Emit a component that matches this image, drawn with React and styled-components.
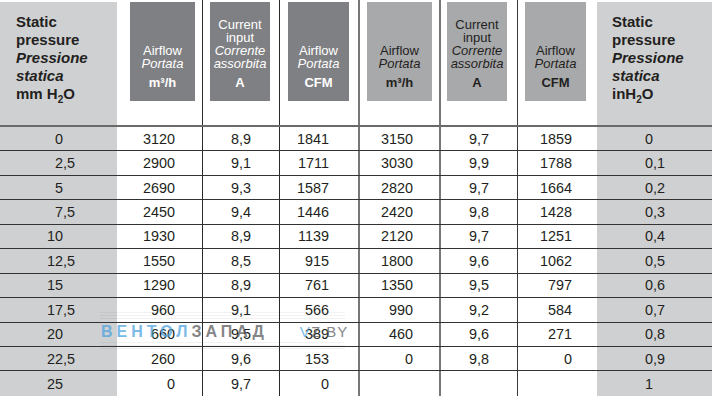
import styled, { createGlobalStyle } from "styled-components";

const GlobalStyle = createGlobalStyle`
  html, body {
    margin: 0;
    padding: 0;
    background: #ffffff;
  }
  body {
    font-family: "Liberation Sans", Arial, sans-serif;
    color: #231f20;
  }
`;

const SIDE_BG = "#cfd0d2";
const DARK_BOX = "#7f8083";
const LIGHT_BOX = "#a8a9ab";

// column layout: width, alignment and the rule on its left
const columns = [
  { w: 117, bg: SIDE_BG, kind: "dec", intW: 63 },
  { w: 85, align: "right", pr: 27 },
  { w: 77, align: "center", line: "#2a2a2a", lw: 1 },
  { w: 79, align: "right", pr: 29, line: "#2a2a2a", lw: 1 },
  { w: 81, align: "right", pr: 26, line: "#777", lw: 2 },
  { w: 78, align: "center", line: "#777", lw: 2 },
  { w: 80, align: "right", pr: 25, line: "#3a3a3a", lw: 1 },
  { w: 115, bg: SIDE_BG, kind: "dec", intW: 56 },
];

const gridCols = columns.map((c) => `${c.w}px`).join(" ");

const headBoxes = [
  { tone: "dark", w: 65, pl: 13, lines: ["Airflow"], it: ["Portata"], unit: "m³/h" },
  { tone: "dark", w: 60, pl: 7, lines: ["Current", "input"], it: ["Corrente", "assorbita"], unit: "A" },
  { tone: "dark", w: 61, pl: 8, lines: ["Airflow"], it: ["Portata"], unit: "CFM" },
  { tone: "light", w: 65, pl: 7, lines: ["Airflow"], it: ["Portata"], unit: "m³/h" },
  { tone: "light", w: 60, pl: 6, lines: ["Current", "input"], it: ["Corrente", "assorbita"], unit: "A" },
  { tone: "light", w: 61, pl: 7, lines: ["Airflow"], it: ["Portata"], unit: "CFM" },
];

const rows = [
  ["0", "3120", "8,9", "1841", "3150", "9,7", "1859", "0"],
  ["2,5", "2900", "9,1", "1711", "3030", "9,9", "1788", "0,1"],
  ["5", "2690", "9,3", "1587", "2820", "9,7", "1664", "0,2"],
  ["7,5", "2450", "9,4", "1446", "2420", "9,8", "1428", "0,3"],
  ["10", "1930", "8,9", "1139", "2120", "9,7", "1251", "0,4"],
  ["12,5", "1550", "8,5", "915", "1800", "9,6", "1062", "0,5"],
  ["15", "1290", "8,9", "761", "1350", "9,5", "797", "0,6"],
  ["17,5", "960", "9,1", "566", "990", "9,2", "584", "0,7"],
  ["20", "660", "9,5", "389", "460", "9,6", "271", "0,8"],
  ["22,5", "260", "9,6", "153", "0", "9,8", "0", "0,9"],
  ["25", "0", "9,7", "0", "", "", "", "1"],
];

function PressureHead({ unit }) {
  return (
    <SideHead>
      <b>Static</b>
      <b>pressure</b>
      <BI>Pressione</BI>
      <BI>statica</BI>
      <b>{unit}H<Sub>2</Sub>O</b>
    </SideHead>
  );
}

function DecimalValue({ value, intW }) {
  const [int, frac] = value.split(",");
  return (
    <>
      <IntPart style={{ width: intW }}>{int}</IntPart>
      {frac !== undefined && <span>,{frac}</span>}
    </>
  );
}

export default function App() {
  return (
    <>
      <GlobalStyle />
      <Table>
        <HeadRow>
          <HeadCell $bg={SIDE_BG}>
            <PressureHead unit="mm " />
          </HeadCell>
          {headBoxes.map((b, i) => {
            const col = columns[i + 1];
            return (
              <HeadCell key={i} $line={col.line} $lw={col.lw} $pl={b.pl}>
                <UnitBox $tone={b.tone} $w={b.w}>
                  {b.lines.map((t) => (
                    <Line key={t}>{t}</Line>
                  ))}
                  {b.it.map((t) => (
                    <Line key={t} $italic>
                      {t}
                    </Line>
                  ))}
                  <Unit>{b.unit}</Unit>
                </UnitBox>
              </HeadCell>
            );
          })}
          <HeadCell $bg={SIDE_BG}>
            <SideHead $pl={15}>
              <b>Static</b>
              <b>pressure</b>
              <BI>Pressione</BI>
              <BI>statica</BI>
              <b>inH<Sub>2</Sub>O</b>
            </SideHead>
          </HeadCell>
        </HeadRow>

        {rows.map((r, ri) => (
          <Row key={ri} $last={ri === rows.length - 1}>
            {r.map((v, ci) => {
              const col = columns[ci];
              return (
                <Cell
                  key={ci}
                  $bg={col.bg}
                  $align={col.kind === "dec" ? "left" : col.align}
                  $pr={col.pr}
                  $line={col.line}
                  $lw={col.lw}
                >
                  {col.kind === "dec" ? (
                    <DecimalValue value={v} intW={col.intW} />
                  ) : (
                    v
                  )}
                </Cell>
              );
            })}
          </Row>
        ))}

        <Stripes $top={312} />
        <Stripes $top={342} />
        <Watermark>
          <Blue>ВЕНТОЛ</Blue>
          <Grey>ЗАПАД</Grey>
          <Domain>
            <Blue>V</Blue>
            <Grey>Z.BY</Grey>
          </Domain>
        </Watermark>
      </Table>
    </>
  );
}

const Table = styled.div`
  position: relative;
  width: 712px;
  font-family: "Liberation Sans", Arial, sans-serif;
  color: #231f20;
`;

const HeadRow = styled.div`
  display: grid;
  grid-template-columns: ${gridCols};
  height: 127px;
  box-sizing: border-box;
  border-bottom: 2px solid #6a6a6a;
`;

const HeadCell = styled.div`
  box-sizing: border-box;
  border-top: ${(p) => (p.$bg ? "2px solid #ffffff" : "none")};
  background: ${(p) => p.$bg || "transparent"};
  border-left: ${(p) => (p.$line ? `${p.$lw}px solid ${p.$line}` : "none")};
  padding-left: ${(p) => p.$pl || 0}px;
  padding-top: ${(p) => (p.$bg ? 0 : 2)}px;
`;

const SideHead = styled.div`
  display: flex;
  flex-direction: column;
  padding: 11px 0 0 ${(p) => p.$pl || 16}px;
  font-size: 15px;
  line-height: 18px;
  font-weight: 700;
  color: #231f20;
`;

const BI = styled.b`
  font-style: italic;
`;

const Sub = styled.span`
  font-size: 10px;
  position: relative;
  top: 4px;
`;

const UnitBox = styled.div`
  width: ${(p) => p.$w}px;
  height: 99px;
  box-sizing: border-box;
  padding-bottom: 11px;
  background: ${(p) => (p.$tone === "dark" ? DARK_BOX : LIGHT_BOX)};
  color: ${(p) => (p.$tone === "dark" ? "#ffffff" : "#231f20")};
  display: flex;
  flex-direction: column;
  justify-content: flex-end;
  align-items: center;
  text-align: center;
  font-size: 13px;
  line-height: 13px;
`;

const Line = styled.span`
  font-style: ${(p) => (p.$italic ? "italic" : "normal")};
  white-space: nowrap;
`;

const Unit = styled.span`
  margin-top: 6px;
  font-weight: 700;
  line-height: 14px;
`;

const Row = styled.div`
  display: grid;
  grid-template-columns: ${gridCols};
  height: 24.45px;
  box-sizing: border-box;
  border-bottom: ${(p) => (p.$last ? "none" : "1px solid #333")};
`;

const Cell = styled.div`
  box-sizing: border-box;
  display: flex;
  align-items: center;
  justify-content: ${(p) =>
    p.$align === "right" ? "flex-end" : p.$align === "center" ? "center" : "flex-start"};
  padding-right: ${(p) => p.$pr || 0}px;
  background: ${(p) => p.$bg || "transparent"};
  border-left: ${(p) => (p.$line ? `${p.$lw}px solid ${p.$line}` : "none")};
  font-size: 14.4px;
  white-space: nowrap;
`;

const IntPart = styled.span`
  display: inline-block;
  text-align: right;
`;

const Watermark = styled.div`
  position: absolute;
  left: 101px;
  top: 323px;
  display: flex;
  align-items: baseline;
  font-size: 16px;
  font-weight: 700;
  letter-spacing: 4px;
  opacity: 0.75;
  pointer-events: none;
`;

const Blue = styled.span`
  color: #4fa3de;
`;

const Grey = styled.span`
  color: #5b5d60;
`;

const Domain = styled.span`
  margin-left: 32px;
  font-size: 15px;
  font-weight: 400;
  letter-spacing: 1px;
`;

const Stripes = styled.div`
  position: absolute;
  left: 100px;
  top: ${(p) => p.$top}px;
  width: 245px;
  height: 8px;
  background: repeating-linear-gradient(
    to bottom,
    rgba(0, 0, 0, 0.05) 0px,
    rgba(0, 0, 0, 0.05) 1px,
    transparent 1px,
    transparent 3px
  );
  pointer-events: none;
`;
